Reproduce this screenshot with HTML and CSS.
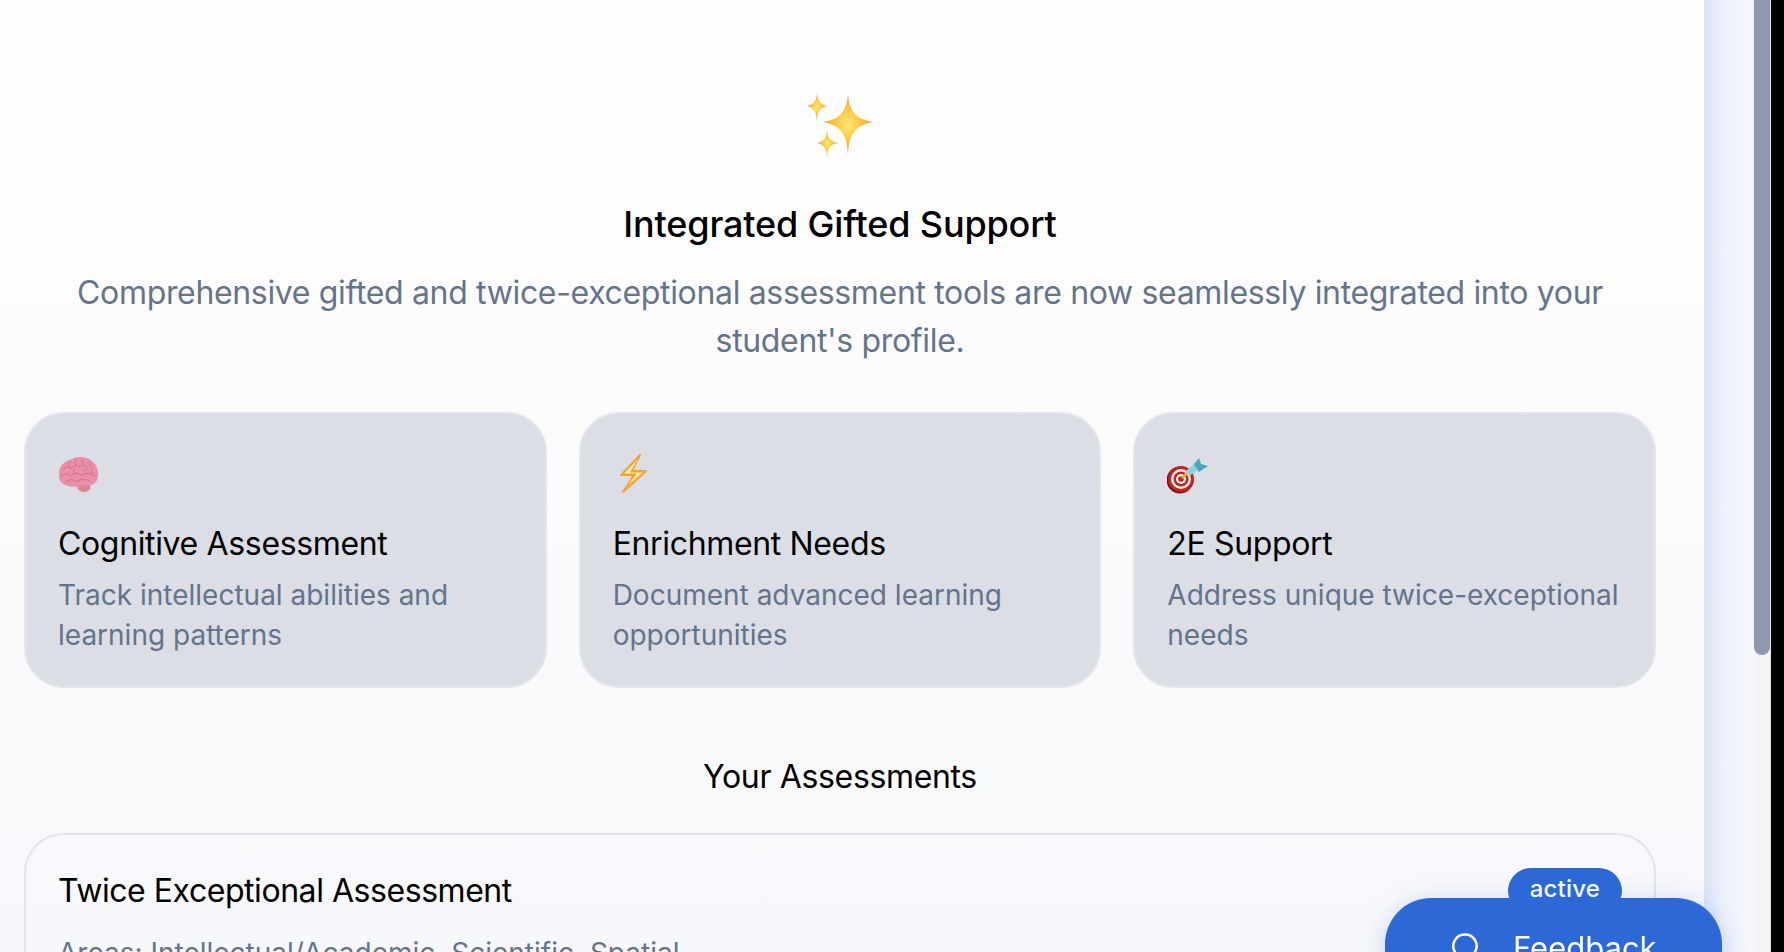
FILE: index.html
```html
<!doctype html>
<html lang="en">
<head>
    <meta charset="utf-8">
    <title>Integrated Gifted Support</title>
    <link rel="stylesheet" href="styles.css">
</head>
<body>
    <div class="page">
        <main class="panel">
            <svg class="hero-icon" viewBox="0 0 66 66" width="66" height="66" aria-hidden="true">
                <defs>
                    <radialGradient id="star" cx="0.5" cy="0.5" r="0.5">
                        <stop offset="0" stop-color="#ffe775"/>
                        <stop offset="0.5" stop-color="#fdc63f"/>
                        <stop offset="1" stop-color="#f59a4a"/>
                    </radialGradient>
                </defs>
                <path fill="url(#star)" d="M41 1 C42 17 47 27 66 30 C47 34 42 43 41 63 C40 43 35 34 16 30 C35 27 40 17 41 1 Z"/>
                <path fill="url(#star)" d="M10 0 C10.600 8 12 12 20 14 C12 16 10.600 21 10 30 C9.400 21 8 16 0 14 C8 12 9.400 8 10 0 Z"/>
                <path fill="url(#star)" d="M20 38 C20.600 45 22 49 31 51 C22 53 20.600 57 20 65 C19.400 57 18 53 10 51 C18 49 19.400 45 20 38 Z"/>
            </svg>
            <h1 class="title">Integrated Gifted Support</h1>
            <p class="subtitle">Comprehensive gifted and twice-exceptional assessment tools are now seamlessly integrated into your student's profile.</p>

            <div class="features">
                <div class="feature">
                    <svg class="feature-icon" viewBox="0 0 42 42" width="42" height="42" aria-hidden="true">
                        <ellipse cx="26" cy="35" rx="6.500" ry="5" fill="#d9858c"/>
                        <path fill="#ea8fa8" d="M1 24 C0 15 6 9 12 8 C19 3 31 4 36 11 C41 16 42 26 37 31 C33 35 27 32 23 34 C16 36 9 34 5 32 C2 30 1 27 1 24 Z"/>
                        <g fill="none" stroke="#d4708d" stroke-width="1" stroke-linecap="round">
                            <path d="M5 18 C8 14 11 14 13 17 C15 13 19 12 21 15 C24 12 29 13 30 17"/>
                            <path d="M3 24 C7 21 11 21 13 24 C17 20 22 21 24 24 C27 20 33 21 37 24"/>
                            <path d="M8 30 C12 27 16 27 19 30 C22 27 28 27 32 29"/>
                            <path d="M12 10 C11 12 11 13 12 15 M18 7 C17 9 17 11 18 13 M25 7 C24 9 24 11 26 13 M32 10 C31 12 31 14 33 15"/>
                            <path d="M35 16 C33 18 33 20 35 21 M16 17 C16 19 16 20 17 21 M27 18 C27 20 28 21 29 22"/>
                        </g>
                    </svg>
                    <h3 class="feature-title">Cognitive Assessment</h3>
                    <p class="feature-text">Track intellectual abilities and learning patterns</p>
                </div>
                <div class="feature">
                    <svg class="feature-icon" viewBox="0 0 42 42" width="42" height="42" aria-hidden="true">
                        <path fill="#f4a23a" stroke="#f4a23a" stroke-width="2" stroke-linejoin="round" d="M27 3 L8 23 L21 23 L10 40 L33 19 L19 19 Z"/>
                        <path fill="#fff0a0" d="M25 7 L11 21.500 L24 21.500 L15 33 L30 20.500 L17 20.500 Z"/>
                    </svg>
                    <h3 class="feature-title">Enrichment Needs</h3>
                    <p class="feature-text">Document advanced learning opportunities</p>
                </div>
                <div class="feature">
                    <svg class="feature-icon" viewBox="0 0 42 42" width="42" height="42" aria-hidden="true">
                        <circle cx="13" cy="28" r="13.500" fill="#7c1512"/>
                        <circle cx="14" cy="27" r="13" fill="#c02420"/>
                        <circle cx="14" cy="27" r="10" fill="#f6efec"/>
                        <circle cx="14" cy="27" r="7.500" fill="#c02420"/>
                        <circle cx="14" cy="27" r="5" fill="#f6efec"/>
                        <circle cx="14" cy="27" r="2.800" fill="#c02420"/>
                        <path stroke="#e2b33c" stroke-width="2.500" d="M15 26 L20 21"/>
                        <path fill="#8ccfdd" d="M19 19 L28 11 L33 17 L22 24 Z"/>
                        <path fill="#4da5bb" d="M27 12 L32 6 L34 12 L41 14 L32 20 Z"/>
                    </svg>
                    <h3 class="feature-title">2E Support</h3>
                    <p class="feature-text">Address unique twice-exceptional needs</p>
                </div>
            </div>

            <h2 class="section-title">Your Assessments</h2>

            <div class="assessment">
                <div class="assessment-head">
                    <h3 class="assessment-title">Twice Exceptional Assessment</h3>
                    <span class="badge">active</span>
                </div>
                <p class="assessment-areas">Areas: Intellectual/Academic, Scientific, Spatial</p>
            </div>
        </main>
        <div class="band"></div>
        <div class="scrollbar"><div class="thumb"></div></div>
        <div class="edge"></div>
    </div>

    <button class="feedback">
        <svg viewBox="0 0 26 28" width="26" height="28" aria-hidden="true">
            <path fill="none" stroke="#fff" stroke-width="2.500" d="M13 1.500 A11.500 11.500 0 1 1 6 22 L2 25 L3 19 A11.500 11.500 0 0 1 13 1.500 Z"/>
        </svg>
        <span>Feedback</span>
    </button>
</body>
</html>
```

FILE: styles.css
```css
html, body {
    margin: 0;
    height: 100%;
    overflow: hidden;
}
body {
    font-family: "Inter", "Liberation Sans", sans-serif;
    color: #000;
}
.page {
    display: flex;
    height: 952px;
}
.panel {
    flex: 0 0 1704px;
    box-sizing: border-box;
    padding: 92px 48px 0 24px;
    background: linear-gradient(180deg, #fefefe 0%, #fbfbfc 50%, #f7f8fb 100%);
    text-align: center;
    overflow: hidden;
}
.hero-icon {
    display: block;
    margin: 0 auto;
}
.title {
    margin: 42px 0 0;
    font-size: 36px;
    line-height: 48px;
    font-weight: 500;
    letter-spacing: -0.15px;
}
.subtitle {
    margin: 21px 0 0;
    font-size: 32px;
    line-height: 48px;
    letter-spacing: -0.34px;
    color: #64748b;
}
.features {
    display: grid;
    grid-template-columns: repeat(3, 1fr);
    gap: 32px;
    margin-top: 47px;
    text-align: left;
}
.feature {
    box-sizing: border-box;
    height: 276px;
    padding: 38px 32px 0;
    background: #dbdee4;
    border: 2px solid #e2e6ec;
    border-radius: 40px;
}
.feature-icon {
    display: block;
}
.feature-title {
    margin: 28px 0 0;
    font-size: 32px;
    line-height: 44px;
    font-weight: 400;
    letter-spacing: -0.35px;
}
.feature-text {
    margin: 9px 0 0;
    font-size: 28px;
    line-height: 40px;
    color: #64748b;
}
.section-title {
    margin: 66px 0 0;
    font-size: 32px;
    line-height: 46px;
    font-weight: 400;
    letter-spacing: -0.35px;
}
.assessment {
    box-sizing: border-box;
    height: 300px;
    margin-top: 33px;
    padding: 33px 32px 0;
    border: 2px solid #e2e6ec;
    border-radius: 40px;
    text-align: left;
}
.assessment-head {
    display: flex;
    justify-content: space-between;
    align-items: center;
}
.assessment-title {
    margin: 0;
    font-size: 32px;
    line-height: 44px;
    font-weight: 400;
    letter-spacing: -0.45px;
}
.badge {
    padding: 0 22px;
    height: 46px;
    line-height: 42px;
    background: #2d69d6;
    color: #fff;
    font-size: 24px;
    font-weight: 500;
    letter-spacing: 0.2px;
    border-radius: 24px;
}
.assessment-areas {
    margin: 19px 0 0;
    font-size: 28px;
    line-height: 40px;
    color: #64748b;
}
.band {
    flex: 0 0 50px;
    background: linear-gradient(90deg, #d9e4f6 0%, #eef2fb 40%, #f6f8fd 100%);
}
.scrollbar {
    flex: 0 0 16px;
    background: #f5f5f7;
    border-right: 1px solid #e4e4e6;
}
.thumb {
    height: 655px;
    background: #8e9aab;
    border-radius: 0 0 8px 8px;
}
.edge {
    flex: 1;
    background: #000;
}
.feedback {
    position: fixed;
    left: 1385px;
    top: 898px;
    width: 337px;
    height: 100px;
    display: flex;
    align-items: flex-start;
    justify-content: flex-start;
    gap: 35px;
    padding: 30px 0 0 67px;
    box-sizing: border-box;
    border: 0;
    border-radius: 46px;
    background: #2d69d6;
    color: #fff;
    font-family: inherit;
    font-size: 31px;
    font-weight: 400;
    line-height: 40px;
    box-shadow: 0 4px 24px rgba(45, 105, 214, 0.25);
}
.feedback svg {
    margin-top: 5px;
}
```
